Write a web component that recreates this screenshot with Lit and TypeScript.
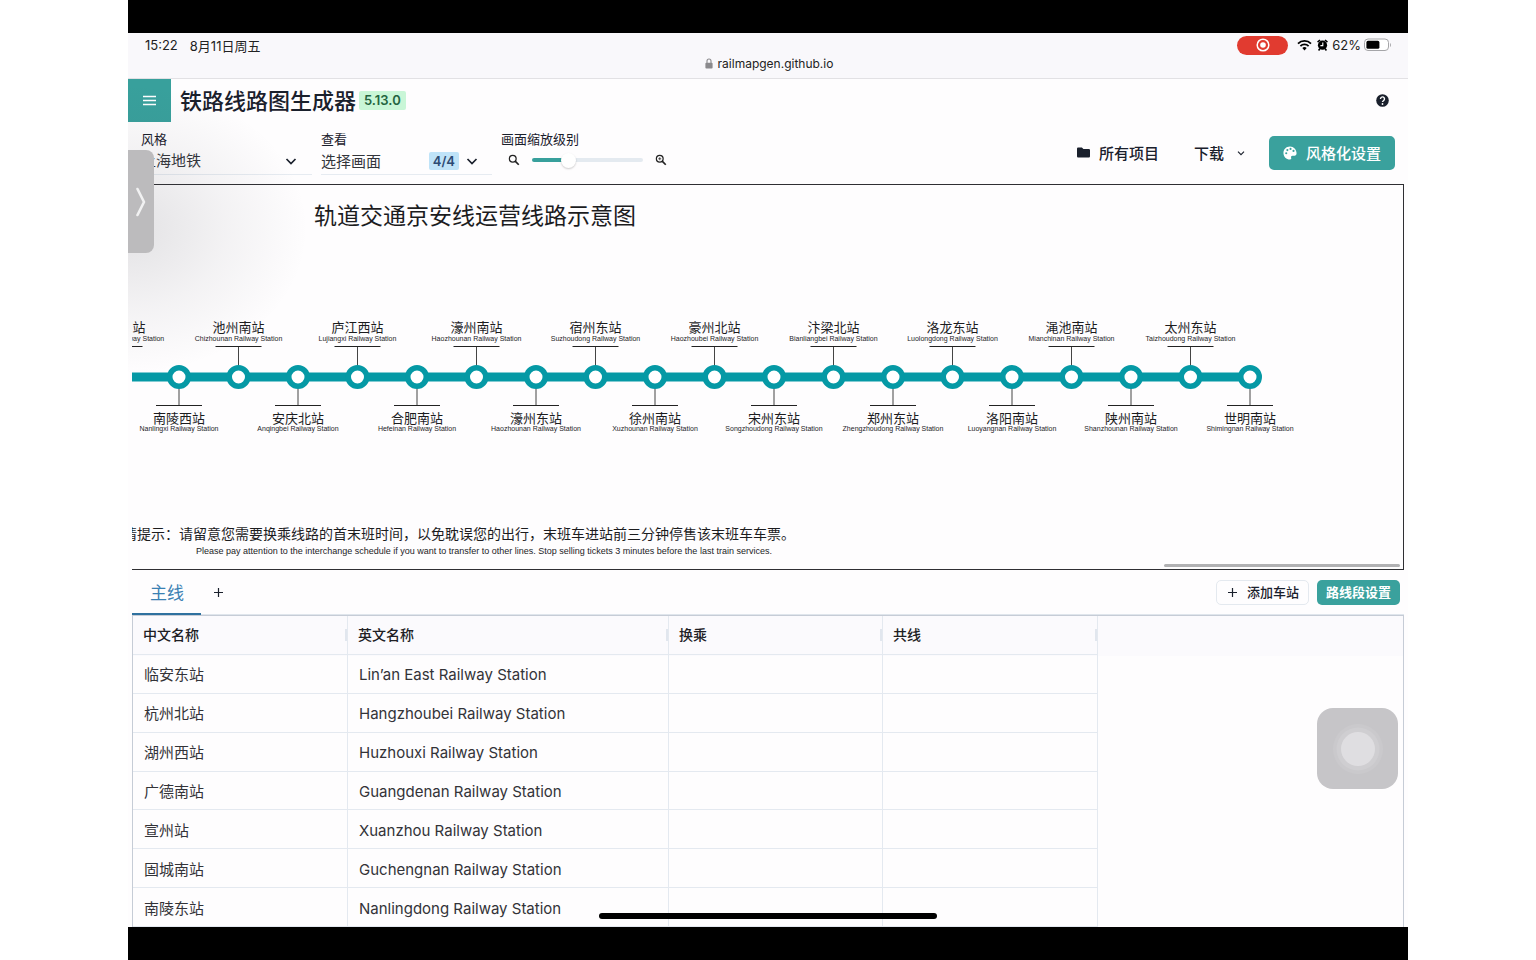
import { LitElement, html, svg, css } from "lit";
import { customElement, state } from "lit/decorators.js";

interface Station {
  zh: string;
  en: string;
}

const LINE_STATIONS: Station[] = [
  { zh: "南陵东站", en: "Nanlingdong Railway Station" },
  { zh: "南陵西站", en: "Nanlingxi Railway Station" },
  { zh: "池州南站", en: "Chizhounan Railway Station" },
  { zh: "安庆北站", en: "Anqingbei Railway Station" },
  { zh: "庐江西站", en: "Lujiangxi Railway Station" },
  { zh: "合肥南站", en: "Hefeinan Railway Station" },
  { zh: "濠州南站", en: "Haozhounan Railway Station" },
  { zh: "濠州东站", en: "Haozhounan Railway Station" },
  { zh: "宿州东站", en: "Suzhoudong Railway Station" },
  { zh: "徐州南站", en: "Xuzhounan Railway Station" },
  { zh: "豪州北站", en: "Haozhoubei Railway Station" },
  { zh: "宋州东站", en: "Songzhoudong Railway Station" },
  { zh: "汴梁北站", en: "Bianliangbei Railway Station" },
  { zh: "郑州东站", en: "Zhengzhoudong Railway Station" },
  { zh: "洛龙东站", en: "Luolongdong Railway Station" },
  { zh: "洛阳南站", en: "Luoyangnan Railway Station" },
  { zh: "渑池南站", en: "Mianchinan Railway Station" },
  { zh: "陕州南站", en: "Shanzhounan Railway Station" },
  { zh: "太州东站", en: "Taizhoudong Railway Station" },
  { zh: "世明南站", en: "Shimingnan Railway Station" },
];

const ROWS: Station[] = [
  { zh: "临安东站", en: "Lin’an East Railway Station" },
  { zh: "杭州北站", en: "Hangzhoubei Railway Station" },
  { zh: "湖州西站", en: "Huzhouxi Railway Station" },
  { zh: "广德南站", en: "Guangdenan Railway Station" },
  { zh: "宣州站", en: "Xuanzhou Railway Station" },
  { zh: "固城南站", en: "Guchengnan Railway Station" },
  { zh: "南陵东站", en: "Nanlingdong Railway Station" },
];

const chevron = html`<svg class="chev" viewBox="0 0 12 12" aria-hidden="true">
  <path d="M1.5 4 L6 8.5 L10.5 4" fill="none" stroke="currentColor" stroke-width="1.7" />
</svg>`;

const magnifier = (detail: unknown) => html`<svg class="mag" viewBox="0 0 24 24" aria-hidden="true">
  <circle cx="9.5" cy="9.5" r="6.8" fill="none" stroke="#222" stroke-width="2.4" />
  <path d="M14.3 14.3 L21.5 21.5" stroke="#222" stroke-width="3.4" />
  ${detail}
</svg>`;

@customElement("line-map")
export class LineMap extends LitElement {
  static styles = css`
    :host {
      display: block;
      flex: none;
      position: relative;
      height: 384px;
      margin: 0 4px;
      border: 1px solid #2f2f33;
      border-left: 0;
      overflow: hidden;
    }
    .map {
      display: block;
      width: 100%;
      height: 100%;
      fill: #1c1c1e;
      font-family: "Noto Sans CJK SC", sans-serif;
    }
    .title {
      font-size: 23px;
    }
    .zh {
      font-size: 13px;
      text-anchor: middle;
    }
    .en {
      font-family: "Liberation Sans", Arial, sans-serif;
      font-size: 7px;
      text-anchor: middle;
    }
    .note {
      font-size: 14px;
      text-anchor: middle;
    }
    .note-en {
      font-family: "Liberation Sans", Arial, sans-serif;
      font-size: 9px;
      text-anchor: middle;
    }
    .lead {
      stroke: #444;
      stroke-width: 1;
    }
    .tick {
      stroke: #222;
      stroke-width: 1;
    }
    .track {
      stroke: #0599a5;
      stroke-width: 9;
    }
    .stop {
      fill: #fff;
      stroke: #0599a5;
      stroke-width: 5.5;
    }
    .thumb {
      position: absolute;
      right: 3px;
      bottom: 2px;
      width: 236px;
      height: 3px;
      border-radius: 2px;
      background: #b1b1b3;
    }
  `;

  private x(i: number) {
    const first = 47;
    const last = 1118;
    return first + ((last - first) * (i - 1)) / (LINE_STATIONS.length - 2);
  }

  private station(s: Station, i: number) {
    const x = this.x(i);
    const up = i % 2 === 0;
    const tickY = up ? 161 : 220;
    return svg`
      <line class="lead" x1=${x} x2=${x} y1=${tickY} y2="192"></line>
      <line class="tick" x1=${x - 23} x2=${x + 23} y1=${tickY + 0.5} y2=${tickY + 0.5}></line>
      <circle class="stop" cx=${x} cy="192" r="9.25"></circle>
      <text class="zh" x=${x} y=${up ? 147 : 238}>${s.zh}</text>
      <text class="en" x=${x} y=${up ? 156 : 246}>${s.en}</text>
    `;
  }

  render() {
    return html`
      <svg class="map" role="img" aria-label="轨道交通京安线运营线路示意图">
        <text class="title" x="182" y="39">轨道交通京安线运营线路示意图</text>
        <line class="track" x1=${this.x(0)} x2=${this.x(LINE_STATIONS.length - 1)} y1="192" y2="192"></line>
        ${LINE_STATIONS.map((s, i) => this.station(s, i))}
        <text class="note" x="320" y="354">友情提示：请留意您需要换乘线路的首末班时间，以免耽误您的出行，末班车进站前三分钟停售该末班车车票。</text>
        <text class="note-en" x="352" y="369">Please pay attention to the interchange schedule if you want to transfer to other lines. Stop selling tickets 3 minutes before the last train services.</text>
      </svg>
      <div class="thumb"></div>
    `;
  }
}

@customElement("station-table")
export class StationTable extends LitElement {
  static styles = css`
    :host {
      display: block;
      flex: 1;
      min-height: 0;
      margin: 0 4px;
      border: 1px solid #c6ccd6;
      border-bottom: 0;
      background: linear-gradient(#fbfafd 40px, #fefdfe 40px);
      overflow: hidden;
    }
    .grid {
      width: 965px;
      height: 100%;
      table-layout: fixed;
      border-collapse: separate;
      border-spacing: 0;
      color: #333338;
      font-size: 15px;
    }
    .narrow {
      width: 214px;
    }
    .first {
      width: 215px;
    }
    .wide {
      width: 321px;
    }
    .head,
    .cell {
      box-sizing: border-box;
      padding: 0 10px;
      border-right: 1px solid #e4e9f0;
      border-bottom: 1px solid #e4e9f0;
      text-align: left;
      vertical-align: middle;
      line-height: 20px;
      font-weight: 400;
      white-space: nowrap;
    }
    .cell {
      padding: 3px 11px 0;
    }
    .head {
      height: 39px;
      color: #202024;
      font-size: 14px;
      font-weight: 500;
      background: linear-gradient(#e1e6ee, #e1e6ee) right center / 2px 12px no-repeat;
    }
  `;

  render() {
    return html`
      <table class="grid">
        <colgroup>
          <col class="first" />
          <col class="wide" />
          <col class="narrow" />
          <col />
        </colgroup>
        <thead>
          <tr>
            ${["中文名称", "英文名称", "换乘", "共线"].map((h) => html`<th class="head" scope="col">${h}</th>`)}
          </tr>
        </thead>
        <tbody>
          ${ROWS.map(
            (r) => html`<tr>
              <td class="cell">${r.zh}</td>
              <td class="cell">${r.en}</td>
              <td class="cell"></td>
              <td class="cell"></td>
            </tr>`
          )}
        </tbody>
      </table>
    `;
  }
}

@customElement("app-root")
export class AppRoot extends LitElement {
  static styles = css`
    :host {
      display: block;
      box-sizing: border-box;
      height: 100vh;
      padding: 0 128px;
      background: #fff;
      font-family: Inter, "Noto Sans CJK SC", sans-serif;
      color: #1a202c;
    }
    button,
    select,
    input {
      margin: 0;
      padding: 0;
      border: 0;
      background: none;
      color: inherit;
      font: inherit;
    }
    .frame {
      box-sizing: border-box;
      height: 100%;
      padding: 33px 0;
      background: #000;
    }
    .screen {
      position: relative;
      display: flex;
      flex-direction: column;
      height: 100%;
      background: #fefdfe;
      overflow: hidden;
    }
    .system {
      flex: none;
      border-bottom: 1px solid #e2e1e4;
      background: #f9f8fb;
      color: #222;
      font-size: 13px;
    }
    .status {
      display: flex;
      align-items: center;
      height: 24px;
      padding: 0 16px 0 17px;
    }
    .date {
      flex: 1;
      padding-left: 12px;
    }
    .rec {
      display: flex;
      justify-content: center;
      align-items: center;
      width: 51px;
      height: 19px;
      margin-right: 9px;
      border-radius: 10px;
      background: #e13b30;
    }
    .rec-icon {
      width: 14px;
      height: 14px;
    }
    .wifi {
      width: 15px;
      height: 12px;
      margin-right: 5px;
    }
    .alarm {
      width: 11px;
      height: 12px;
      margin-right: 4px;
    }
    .battery {
      width: 28px;
      height: 14px;
      margin-left: 3px;
    }
    .address {
      display: flex;
      justify-content: center;
      align-items: center;
      gap: 5px;
      height: 13px;
      padding-bottom: 8px;
      padding-left: 2px;
      font-size: 12px;
    }
    .lock {
      width: 8px;
      height: 11px;
    }
    .header {
      display: flex;
      flex: none;
      align-items: center;
      height: 43px;
      padding-right: 19px;
    }
    .menu {
      display: flex;
      justify-content: center;
      align-items: center;
      width: 43px;
      height: 43px;
      background: #38a09c;
    }
    .menu-icon {
      width: 15px;
      height: 11px;
    }
    .title {
      margin: 0 3px 0 9px;
      font-size: 22px;
      font-weight: 500;
      line-height: 28px;
    }
    .tag {
      padding: 0 5px;
      border-radius: 2px;
      background: #c9f6d7;
      color: #23643f;
      font-size: 13px;
      font-weight: 600;
      line-height: 19px;
    }
    .help {
      display: flex;
      margin-left: auto;
    }
    .help-icon {
      width: 13px;
      height: 13px;
    }
    .tools {
      display: flex;
      flex: none;
      height: 62px;
      box-sizing: border-box;
      padding: 8px 13px 0 4px;
    }
    .field {
      display: flex;
      flex-direction: column;
      margin-right: 9px;
    }
    .label {
      padding-left: 9px;
      font-size: 13px;
      line-height: 18px;
    }
    .views .label,
    .zoom .label {
      padding-left: 0;
    }
    .box {
      display: flex;
      align-items: center;
      box-sizing: border-box;
      height: 27px;
      padding-bottom: 1px;
      border-bottom: 1px solid #e6ebf1;
      color: #33353b;
      font-size: 15px;
    }
    .style .box {
      width: 180px;
      padding: 0 15px 0 9px;
    }
    .picker {
      flex: 1;
      appearance: none;
      outline: none;
      line-height: 20px;
    }
    .views .box {
      width: 171px;
      padding-right: 14px;
      text-align: left;
    }
    .pick {
      flex: 1;
    }
    .count {
      margin-right: 7px;
      padding: 0 4px;
      border-radius: 2px;
      background: #bfe3f8;
      color: #2c4a73;
      font-size: 13px;
      font-weight: 600;
      line-height: 18px;
    }
    .chev {
      width: 12px;
      height: 12px;
      color: #1a202c;
    }
    .slide {
      display: flex;
      align-items: center;
      gap: 12px;
      height: 24px;
      padding-left: 7px;
    }
    .mag {
      width: 12px;
      height: 12px;
    }
    .range {
      appearance: none;
      width: 111px;
      height: 4px;
      border-radius: 2px;
      background: linear-gradient(90deg, #38a09c 33%, #e4eaf0 33%);
    }
    .range::-webkit-slider-thumb {
      appearance: none;
      width: 15px;
      height: 15px;
      border-radius: 50%;
      background: #fff;
      box-shadow: 0 1px 2px rgba(0, 0, 0, 0.2);
    }
    .actions {
      display: flex;
      align-items: center;
      align-self: flex-start;
      height: 35px;
      margin-top: 5px;
      margin-left: auto;
      font-size: 15px;
      font-weight: 500;
    }
    .plain {
      display: flex;
      align-items: center;
      gap: 9px;
      margin-right: 35px;
    }
    .download {
      gap: 13px;
      margin-right: 24px;
    }
    .download .chev {
      width: 8px;
      height: 8px;
    }
    .folder {
      width: 13px;
      height: 11px;
    }
    .primary {
      display: flex;
      align-items: center;
      gap: 9px;
      height: 34px;
      padding: 0 14px;
      border-radius: 5px;
      background: #3aa19d;
      color: #fff;
    }
    .palette {
      width: 14px;
      height: 14px;
    }
    .tabs {
      display: flex;
      flex: none;
      align-items: center;
      height: 45px;
      box-sizing: border-box;
      margin: 0 4px;
      border-bottom: 1px solid #dfe5ec;
    }
    .tab {
      height: 45px;
      padding: 0 17px 0 18px;
      border-bottom: 2px solid #2f719f;
      color: #3a80b3;
      font-size: 17px;
    }
    .add {
      display: flex;
      margin: 0 auto 0 13px;
    }
    .plus {
      width: 9px;
      height: 9px;
    }
    .small {
      height: 25px;
      box-sizing: border-box;
      border-radius: 5px;
      font-size: 13px;
      font-weight: 500;
      line-height: 22px;
    }
    .outline {
      display: flex;
      align-items: center;
      gap: 10px;
      margin-right: 8px;
      padding: 0 9px 0 11px;
      border: 1px solid #e4e9ef;
    }
    .solid {
      margin-right: 4px;
      padding: 0 9px;
      background: #3aa19d;
      color: #fff;
      font-weight: 700;
    }
    .shade {
      position: absolute;
      left: 0;
      top: 46px;
      width: 200px;
      height: 300px;
      background: radial-gradient(ellipse 180px 145px at 0 50%, rgba(70, 70, 80, 0.15), rgba(70, 70, 80, 0.06) 55%, transparent);
      pointer-events: none;
    }
    .handle {
      position: absolute;
      left: 0;
      top: 117px;
      display: flex;
      justify-content: center;
      align-items: center;
      width: 26px;
      height: 103px;
      border-radius: 0 8px 8px 0;
      background: #bcbbbd;
    }
    .handle-icon {
      width: 10px;
      height: 30px;
    }
    .assist {
      position: absolute;
      right: 10px;
      bottom: 138px;
      display: flex;
      justify-content: center;
      align-items: center;
      width: 81px;
      height: 81px;
      border-radius: 16px;
      background: #c6c5c8;
    }
    .assist-icon {
      width: 52px;
      height: 52px;
    }
    .home {
      position: absolute;
      left: 471px;
      right: 471px;
      bottom: 8px;
      height: 6px;
      border-radius: 3px;
      background: #000;
    }
  `;

  @state() private zoom = 30;

  private plus = html`<svg class="plus" viewBox="0 0 9 9" aria-hidden="true">
    <path d="M4.5 0v9M0 4.5h9" stroke="currentColor" stroke-width="1.2" />
  </svg>`;

  private systemBar() {
    return html`
      <div class="system">
        <div class="status">
          <span>15:22</span>
          <span class="date">8月11日周五</span>
          <span class="rec">
            <svg class="rec-icon" viewBox="0 0 14 14">
              <circle cx="7" cy="7" r="5.8" fill="none" stroke="#fff" stroke-width="1.5" />
              <circle cx="7" cy="7" r="2.8" fill="#fff" />
            </svg>
          </span>
          <svg class="wifi" viewBox="0 0 15 12">
            <path d="M1 4.6a9.3 9.3 0 0 1 13 0M3.4 7.1a5.9 5.9 0 0 1 8.2 0" fill="none" stroke="#000" stroke-width="1.8" />
            <path d="M7.5 11.4 5.3 9.1a3.2 3.2 0 0 1 4.4 0z" />
          </svg>
          <svg class="alarm" viewBox="0 0 11 12">
            <circle cx="5.5" cy="6.2" r="4.6" />
            <path d="M.6 3.2 3 1M10.4 3.2 8 1M1.6 11.4l1.2-1.6M9.4 11.4 8.2 9.8" stroke="#000" stroke-width="1.6" />
            <path d="M5.8 3.4v3.2H3.4" fill="none" stroke="#fff" stroke-width="1.1" />
          </svg>
          <span>62%</span>
          <svg class="battery" viewBox="0 0 28 14">
            <rect x=".5" y="1" width="24" height="11.5" rx="3.5" fill="#fff" stroke="#a5a5a8" />
            <rect x="2.4" y="2.8" width="13" height="8" rx="1.6" />
            <path d="M26 5v4c1.3-.5 1.3-3.5 0-4z" fill="#a5a5a8" />
          </svg>
        </div>
        <div class="address">
          <svg class="lock" viewBox="0 0 8 11">
            <path d="M2 5V3a2 2 0 0 1 4 0v2" fill="none" stroke="#8b8a8d" stroke-width="1.1" />
            <rect x=".4" y="4.8" width="7.2" height="5.8" rx="1" fill="#8b8a8d" />
          </svg>
          <span>railmapgen.github.io</span>
        </div>
      </div>
    `;
  }

  private toolbar() {
    return html`
      <div class="tools">
        <div class="field style">
          <label class="label" for="style">风格</label>
          <div class="box">
            <select class="picker" id="style"><option>上海地铁</option></select>
            ${chevron}
          </div>
        </div>
        <div class="field views">
          <label class="label" for="views">查看</label>
          <button class="box" id="views">
            <span class="pick">选择画面</span><span class="count">4/4</span>${chevron}
          </button>
        </div>
        <div class="field zoom">
          <label class="label" for="zoom">画面缩放级别</label>
          <div class="slide">
            ${magnifier("")}
            <input
              class="range"
              id="zoom"
              type="range"
              .value=${String(this.zoom)}
              @input=${(e: Event) => (this.zoom = Number((e.target as HTMLInputElement).value))}
            />
            ${magnifier(svg`<path d="M9.5 6.5v6M6.5 9.5h6" stroke="#222" stroke-width="1.5"></path>`)}
          </div>
        </div>
        <div class="actions">
          <button class="plain">
            <svg class="folder" viewBox="0 0 13 11">
              <path d="M1.3.5h3.6l1.5 1.5h5.3c.7 0 1.3.5 1.3 1.2v6c0 .7-.6 1.3-1.3 1.3H1.3C.6 10.5 0 9.9 0 9.2V1.8C0 1 .6.5 1.3.5z" fill="#1a202c" />
            </svg>
            所有项目
          </button>
          <button class="plain download">下载 ${chevron}</button>
          <button class="primary">
            <svg class="palette" viewBox="0 0 16 16">
              <path d="M8 .5C3.7.5.5 3.8.5 8s3.3 7.5 7.5 7.5c1.3 0 1.7-1 1.3-2-.5-1.3.1-2.5 1.5-2.5h2.4c1.4 0 2.3-1.1 2.3-2.7C15.500 4 12.200.5 8 .5z" fill="#fff" />
              <g fill="#3aa19d">
                <circle cx="3.7" cy="8.3" r="1.2" />
                <circle cx="5" cy="4.7" r="1.2" />
                <circle cx="8.6" cy="3.3" r="1.2" />
                <circle cx="12" cy="5.6" r="1.2" />
              </g>
            </svg>
            风格化设置
          </button>
        </div>
      </div>
    `;
  }

  render() {
    return html`
      <div class="frame">
        <main class="screen">
          ${this.systemBar()}
          <header class="header">
            <button class="menu" aria-label="菜单">
              <svg class="menu-icon" viewBox="0 0 15 11">
                <path d="M1 1.5h13M1 5.5h13M1 9.5h13" stroke="#fff" stroke-width="1.4" />
              </svg>
            </button>
            <h1 class="title">铁路线路图生成器</h1>
            <span class="tag">5.13.0</span>
            <button class="help" aria-label="帮助">
              <svg class="help-icon" viewBox="0 0 13 13">
                <circle cx="6.5" cy="6.5" r="6.3" fill="#1a202c" />
                <path d="M4.5 5a2 2 0 1 1 3.1 1.6C6.9 7.1 6.5 7.3 6.5 8.1" fill="none" stroke="#fff" stroke-width="1.4" />
                <circle cx="6.5" cy="10" r=".9" fill="#fff" />
              </svg>
            </button>
          </header>
          ${this.toolbar()}
          <line-map></line-map>
          <nav class="tabs">
            <button class="tab">主线</button>
            <button class="add" aria-label="添加支线">${this.plus}</button>
            <button class="small outline">${this.plus} 添加车站</button>
            <button class="small solid">路线段设置</button>
          </nav>
          <station-table></station-table>
          <div class="shade"></div>
          <button class="handle" aria-label="展开">
            <svg class="handle-icon" viewBox="0 0 10 30">
              <path d="M1.5 2 8 15 1.5 28" fill="none" stroke="#f1f1f2" stroke-width="2.6" stroke-linecap="round" stroke-linejoin="round" />
            </svg>
          </button>
          <button class="assist" aria-label="辅助触控">
            <svg class="assist-icon" viewBox="0 0 52 52">
              <circle cx="26" cy="26" r="25" fill="#cac9cc" />
              <circle cx="26" cy="26" r="21.5" fill="#cfced1" />
              <circle cx="26" cy="26" r="17" fill="#dfdee1" />
            </svg>
          </button>
          <div class="home"></div>
        </main>
      </div>
    `;
  }
}
